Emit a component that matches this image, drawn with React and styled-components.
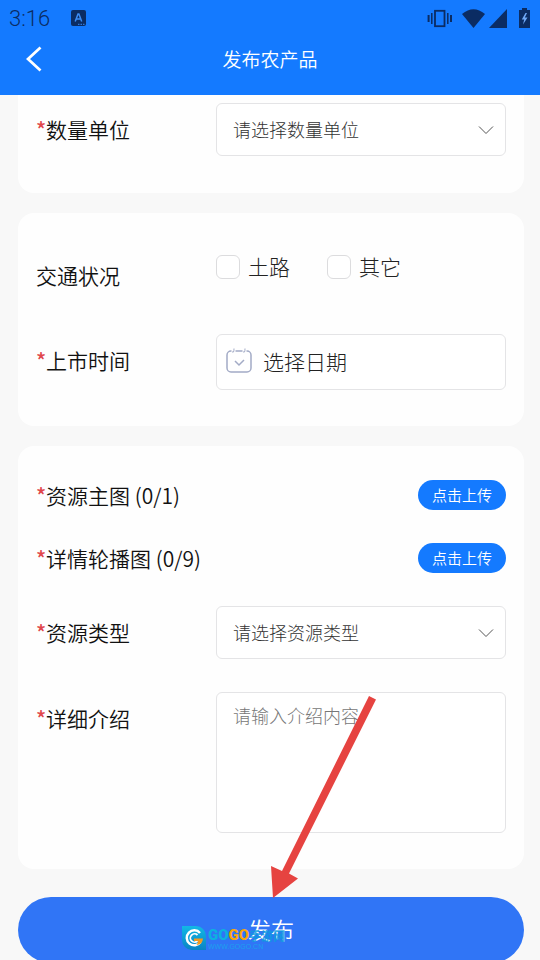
import React, { useState } from "react";
import styled, { createGlobalStyle } from "styled-components";

const roadOptions = [
  { id: "dirt", name: "土路" },
  { id: "other", name: "其它" },
];

const unitOptions = ["公斤", "斤", "吨"];
const typeOptions = ["蔬菜", "水果", "粮油"];

function StatusBar() {
  return (
    <Status>
      <Clock>3:16</Clock>
      <svg width="16" height="17" viewBox="0 0 16 17" aria-hidden="true">
        <rect width="15" height="16" rx="2" fill="#0b2c63" />
        <path
          d="M4.2 11.5 7 4h.9l2.800 7.500M5.200 9h4.500"
          fill="none"
          stroke="#3b8cf5"
          strokeWidth="1.5"
        />
        <path d="M7 14.3h6.5" stroke="#3b8cf5" strokeDasharray="1.5 1" />
      </svg>
      <StatusIcons>
        <svg width="26" height="19" viewBox="0 0 26 19" aria-hidden="true">
          <g fill="none" stroke="#0b2c63">
            <rect x="8" y="1.8" width="9.5" height="15.4" strokeWidth="1.8" />
            <path d="M4.8 4v11M20.8 4v11" strokeWidth="1.5" />
            <path d="M1.6 6v7M24 6v7" strokeWidth="2" />
          </g>
        </svg>
        <svg width="23" height="19" viewBox="0 0 23 19" aria-hidden="true">
          <path d="M0 5Q11.500-4.500 23 5L11.500 19Z" fill="#0b2c63" />
        </svg>
        <svg width="18" height="19" viewBox="0 0 18 19" aria-hidden="true">
          <path d="M18 0v19H0Z" fill="#0b2c63" />
        </svg>
        <svg width="11" height="20" viewBox="0 0 11 20" aria-hidden="true">
          <path d="M3 0h5v2h3v18H0V2h3Z" fill="#0b2c63" />
          <path d="M6.500 5 2.800 11.500h2.400L4 16.500l4.500-7H5.800L8 5Z" fill="#6fa9f7" />
        </svg>
      </StatusIcons>
    </Status>
  );
}

function Label({ htmlFor, id, as, required, children }) {
  return (
    <LabelText htmlFor={htmlFor} id={id} as={as}>
      {required && <Star>*</Star>}
      {children}
    </LabelText>
  );
}

function SelectField({ id, placeholder, options }) {
  return (
    <SelectBox>
      <Select id={id} defaultValue="">
        <option value="">{placeholder}</option>
        {options.map((item) => (
          <option key={item}>{item}</option>
        ))}
      </Select>
      <Chevron width="16" height="10" viewBox="0 0 16 10" aria-hidden="true">
        <path d="M1 1.500l7 7 7-7" fill="none" stroke="#555" strokeWidth="1" />
      </Chevron>
    </SelectBox>
  );
}

function Watermark() {
  return (
    <Mark>
      <svg width="24" height="24" viewBox="0 0 24 24" aria-hidden="true">
        <defs>
          <linearGradient id="leaf" x1="0" y1="0" x2="0" y2="1">
            <stop offset="0" stopColor="#12b9e6" />
            <stop offset="1" stopColor="#0983c4" />
          </linearGradient>
        </defs>
        <path d="M0 0h14a10 10 0 0 1 10 10v14H10A10 10 0 0 1 0 14Z" fill="url(#leaf)" />
        <path
          d="M18 7A7.500 7.500 0 1 0 18.500 16"
          fill="none"
          stroke="#fff"
          strokeWidth="2.500"
        />
        <path
          d="M15.500 9a4.200 4.200 0 1 0 0 6"
          fill="none"
          stroke="#fff"
          strokeWidth="1.800"
        />
        <path d="M12 12.500h9q-.5 6-6.500 6.500 1.500-2 1.500-4h-4Z" fill="#f39a1f" />
      </svg>
      <div>
        <MarkName>
          GO<b>GO</b>
          <small>手游网</small>
        </MarkName>
        <MarkUrl>WWW.GOGO.CN</MarkUrl>
      </div>
    </Mark>
  );
}

function App() {
  const [roads, setRoads] = useState([]);

  const toggleRoad = (id) => {
    setRoads(
      roads.includes(id) ? roads.filter((road) => road !== id) : [...roads, id]
    );
  };

  return (
    <Page>
      <GlobalStyle />
      <Header>
        <StatusBar />
        <NavBar>
          <BackButton type="button" aria-label="返回">
            <svg width="16" height="26" viewBox="0 0 16 26" aria-hidden="true">
              <path
                d="M14.500 1.500 2 13l12.500 11.500"
                fill="none"
                stroke="#fff"
                strokeWidth="2.800"
              />
            </svg>
          </BackButton>
          <Title>发布农产品</Title>
        </NavBar>
      </Header>

      <Scroller>
        <Form onSubmit={(e) => e.preventDefault()}>
          <Card $first>
            <Row>
              <Label htmlFor="unit" required>
                数量单位
              </Label>
              <SelectField
                id="unit"
                placeholder="请选择数量单位"
                options={unitOptions}
              />
            </Row>
          </Card>

          <Card>
            <Row role="group" aria-labelledby="road">
              <Label as="span" id="road">
                交通状况
              </Label>
              <Checks>
                {roadOptions.map((item) => (
                  <CheckLabel key={item.id}>
                    <Checkbox
                      type="checkbox"
                      checked={roads.includes(item.id)}
                      onChange={() => toggleRoad(item.id)}
                    />
                    <span>{item.name}</span>
                  </CheckLabel>
                ))}
              </Checks>
            </Row>
            <Row>
              <Label htmlFor="date" required>
                上市时间
              </Label>
              <DateButton id="date" type="button">
                <svg width="26" height="26" viewBox="0 0 26 26" aria-hidden="true">
                  <g fill="none" stroke="#a3abc6" strokeWidth="1.500">
                    <path d="M5.500 3H5a4 4 0 0 0-4 4v13a4 4 0 0 0 4 4h16a4 4 0 0 0 4-4V7a4 4 0 0 0-4-4h-.5M9.500 3h7" />
                    <path d="M6 3.500Q8 6 8 .5M17 3.500q2 2.500 2-3" strokeWidth="1" />
                    <path d="m9 13 4 4 5-5" />
                  </g>
                </svg>
                选择日期
              </DateButton>
            </Row>
          </Card>

          <Card $compact>
            <UploadRow>
              <Label as="span" required>
                资源主图 (0/1)
              </Label>
              <UploadButton type="button">点击上传</UploadButton>
            </UploadRow>
            <UploadRow>
              <Label as="span" required>
                详情轮播图 (0/9)
              </Label>
              <UploadButton type="button">点击上传</UploadButton>
            </UploadRow>
            <Row>
              <Label htmlFor="type" required>
                资源类型
              </Label>
              <SelectField
                id="type"
                placeholder="请选择资源类型"
                options={typeOptions}
              />
            </Row>
            <Row>
              <Label htmlFor="intro" required>
                详细介绍
              </Label>
              <TextArea id="intro" placeholder="请输入介绍内容" />
            </Row>
          </Card>

          <SubmitArea>
            <SubmitButton type="submit">发布</SubmitButton>
            <Watermark />
            <Arrow width="106" height="202" viewBox="0 0 106 202" aria-hidden="true">
              <path
                d="M98 0l7 3.500-87 174 9 5L2 202 0 170l11 5Z"
                fill="#e64340"
              />
            </Arrow>
          </SubmitArea>
        </Form>
      </Scroller>
    </Page>
  );
}

export default App;

const GlobalStyle = createGlobalStyle`
  * {
    box-sizing: border-box;
  }
  body {
    margin: 0;
    background: #f8f8f8;
  }
  body, button, select, textarea {
    font-family: "Noto Sans CJK SC", sans-serif;
    font-weight: 300;
  }
`;

const Page = styled.div`
  display: flex;
  flex-direction: column;
  height: 100vh;
`;

const Header = styled.header`
  flex: none;
  background: #147aff;
`;

const Status = styled.div`
  display: flex;
  align-items: center;
  height: 36px;
  padding: 0 10px 0 9px;
`;

const Clock = styled.span`
  width: 62px;
  color: #0b2c63;
  font-family: Roboto, sans-serif;
  font-size: 22px;
  font-weight: 300;
`;

const StatusIcons = styled.div`
  display: flex;
  align-items: center;
  margin-left: auto;

  > svg:nth-child(1) {
    margin-right: 9px;
  }
  > svg:nth-child(2) {
    margin-right: 4px;
  }
  > svg:nth-child(3) {
    margin-right: 12px;
  }
`;

const NavBar = styled.div`
  display: grid;
  grid-template-columns: 60px 1fr 60px;
  align-items: center;
  height: 59px;
  padding-bottom: 14px;
`;

const BackButton = styled.button`
  display: flex;
  padding: 0 0 0 26px;
  border: none;
  background: none;
  cursor: pointer;
`;

const Title = styled.h1`
  margin: 0;
  color: #fff;
  font-size: 19px;
  font-weight: 350;
  line-height: 28px;
  text-align: center;
`;

const Scroller = styled.main`
  flex: 1;
  min-height: 0;
  overflow-y: auto;
  scrollbar-width: none;
`;

const Form = styled.form`
  display: flex;
  flex-direction: column;
  gap: 20px;
  padding: 0 16px 20px 18px;
`;

const Card = styled.section`
  display: flex;
  flex-direction: column;
  gap: 33px;
  padding: ${(props) =>
    props.$first ? "8px 18px 37px" : props.$compact ? "34px 18px 36px" : "36px 18px"};
  border-radius: ${(props) => (props.$first ? "0 0 16px 16px" : "16px")};
  background: #fefefe;
`;

const Row = styled.div`
  display: grid;
  grid-template-columns: 180px 1fr;
  align-items: start;
`;

const UploadRow = styled.div`
  display: flex;
  align-items: center;
  justify-content: space-between;
  height: 30px;
`;

const LabelText = styled.label`
  display: flex;
  color: #111;
  font-size: 21px;
  font-weight: 350;
  line-height: 52px;
  white-space: pre;
`;

const Star = styled.span`
  width: 10px;
  color: #e0474c;
  font-size: 21px;
  font-weight: 500;
`;

const SelectBox = styled.div`
  position: relative;
`;

const Select = styled.select`
  display: block;
  width: 100%;
  height: 53px;
  padding: 0 40px 2px 16px;
  border: 1px solid #e4e4e6;
  border-radius: 6px;
  appearance: none;
  background: #fff;
  color: #333;
  font-size: 18px;
`;

const Chevron = styled.svg`
  position: absolute;
  top: 22px;
  right: 12px;
  pointer-events: none;
`;

const Checks = styled.div`
  display: flex;
  gap: 37px;
`;

const CheckLabel = styled.label`
  display: flex;
  align-items: center;
  gap: 8px;
  height: 36px;
  color: #222;
  font-size: 21px;

  > span {
    padding-bottom: 2px;
  }
`;

const Checkbox = styled.input`
  width: 24px;
  height: 24px;
  margin: 0;
  border: 1px solid #dcdcde;
  border-radius: 6px;
  appearance: none;
  background: #fff;

  &:checked {
    background: #147aff;
  }
`;

const DateButton = styled.button`
  display: flex;
  align-items: center;
  gap: 11px;
  height: 56px;
  padding: 0 9px 3px;
  border: 1px solid #e4e4e6;
  border-radius: 6px;
  background: #fff;
  color: #222;
  font-size: 21px;
`;

const UploadButton = styled.button`
  height: 30px;
  padding: 0 14px 2px;
  border: none;
  border-radius: 15px;
  background: #147aff;
  color: #fff;
  font-size: 15px;
  font-weight: 350;
`;

const TextArea = styled.textarea`
  display: block;
  width: 100%;
  height: 141px;
  padding: 9px 16px;
  border: 1px solid #e4e4e6;
  border-radius: 6px;
  background: #fff;
  color: #333;
  font-size: 18px;
  resize: none;

  &::placeholder {
    color: #777;
  }
`;

const SubmitArea = styled.div`
  position: relative;
  padding-top: 8px;
`;

const SubmitButton = styled.button`
  display: block;
  width: 100%;
  height: 66px;
  padding-bottom: 3px;
  border: none;
  border-radius: 33px;
  background: #3075f6;
  color: #fff;
  font-size: 23px;
  font-weight: 350;
`;

const Mark = styled.div`
  position: absolute;
  top: 37px;
  left: calc(50% - 89px);
  display: flex;
  gap: 2px;
  pointer-events: none;
`;

const MarkName = styled.div`
  display: flex;
  align-items: center;
  height: 18px;
  color: #0db0e0;
  font-family: Roboto, sans-serif;
  font-size: 15px;
  font-weight: 900;

  > b {
    color: #fba60a;
    font-weight: 900;
  }
  > small {
    color: #0d9be0;
    font-family: "Noto Sans CJK SC", sans-serif;
    font-size: 12px;
    opacity: 0.8;
  }
`;

const MarkUrl = styled.div`
  color: #1ba0ee;
  font-family: "Liberation Sans", sans-serif;
  font-size: 7px;
  font-weight: 400;
  line-height: 6px;
`;

const Arrow = styled.svg`
  position: absolute;
  bottom: 65px;
  left: 50%;
  pointer-events: none;
`;
